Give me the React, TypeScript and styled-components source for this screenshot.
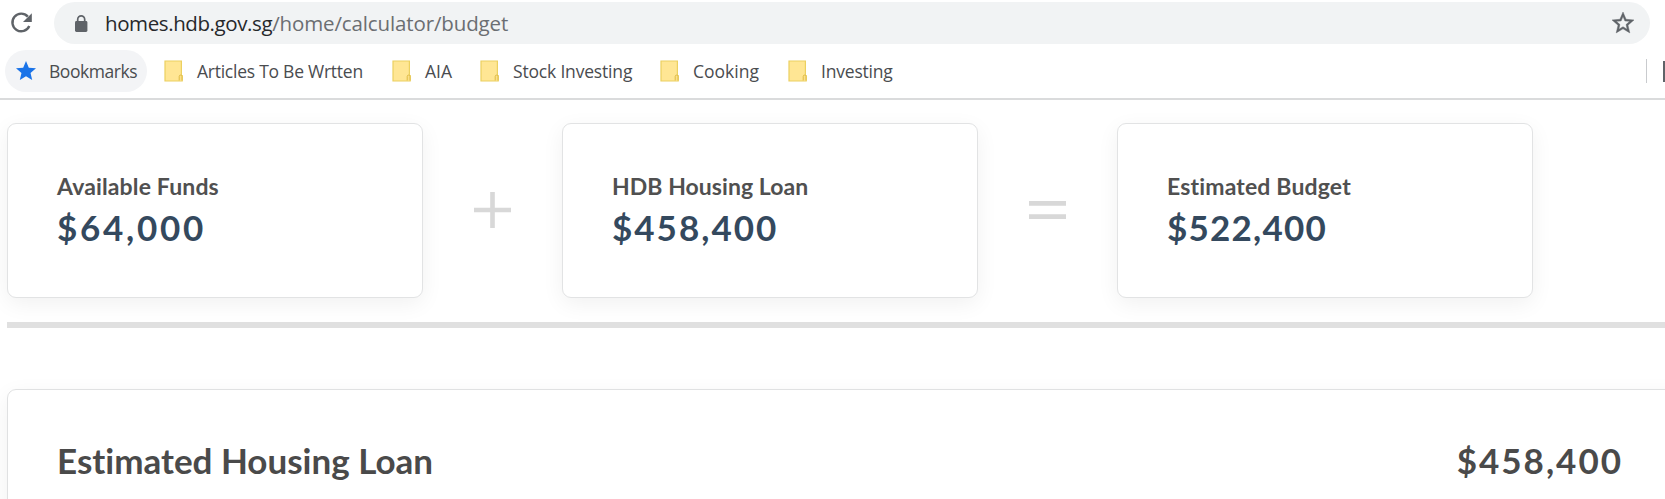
import React from "react";
import styled, { createGlobalStyle } from "styled-components";

const GlobalStyle = createGlobalStyle`
  *, *::before, *::after { box-sizing: border-box; }
  html, body { margin: 0; padding: 0; background: #fff; overflow: hidden; }
`;

const Page = styled.div`
  width: 1665px;
  height: 499px;
  overflow: hidden;
  background: #fff;
  font-family: Lato, "Liberation Sans", sans-serif;
  font-variant-ligatures: none;
`;

const Browser = styled.header`
  height: 100px;
  padding-top: 2px;
  border-bottom: 2px solid #dadbdc;
  font-family: "Open Sans", "Noto Sans", sans-serif;
`;

const AddressRow = styled.div`
  display: flex;
  align-items: center;
  height: 42px;
  padding: 0 15px 0 8px;
`;

const ReloadIcon = styled.svg`
  flex: none;
  width: 26px;
  height: 26px;
  margin-right: 20px;
`;

const AddressBar = styled.div`
  display: flex;
  align-items: center;
  flex: 1;
  height: 42px;
  padding: 0 16px 0 20px;
  border-radius: 21px;
  background: #f1f3f4;
`;

const LockIcon = styled.svg`
  width: 14px;
  height: 18px;
  margin: 2px 17px 0 0;
`;

const Url = styled.span`
  flex: 1;
  padding-bottom: 1px;
  font-size: 20.5px;
  line-height: 28px;
  letter-spacing: -0.13px;
  color: #6b6e72;
`;

const Host = styled.span`
  letter-spacing: -0.4px;
  color: #26282b;
`;

const StarIcon = styled.svg<{ $size: number }>`
  flex: none;
  width: ${(p) => p.$size}px;
  height: ${(p) => p.$size}px;
`;

const BookmarksBar = styled.nav`
  display: flex;
  align-items: center;
  height: 42px;
  margin-top: 6px;
  padding-left: 5px;
  font-size: 17.5px;
  line-height: 24px;
  color: #4a4c4f;
  white-space: nowrap;
`;

const BookmarksButton = styled.div`
  display: flex;
  align-items: center;
  gap: 13px;
  width: 142px;
  height: 42px;
  padding-left: 11px;
  margin-right: 17px;
  border-radius: 21px;
  background: #f3f4f6;
  letter-spacing: -0.45px;
`;

const Folder = styled.div<{ $width: number; $spacing: number }>`
  display: flex;
  align-items: center;
  flex: none;
  gap: 14px;
  width: ${(p) => p.$width}px;
  letter-spacing: ${(p) => p.$spacing}px;
`;

const FolderIcon = styled.svg`
  flex: none;
  width: 19px;
  height: 22px;
`;

const BarEnd = styled.div`
  display: flex;
  align-items: center;
  width: 19px;
  height: 24px;
  margin-left: auto;
  border-left: 1px solid #c9cbce;
`;

const ReadingListEdge = styled.div`
  width: 2px;
  height: 21px;
  margin-left: auto;
  background: #5f6368;
`;

const Content = styled.main`
  padding: 23px 0 0 7px;
`;

const Summary = styled.section`
  display: flex;
  align-items: center;
  height: 175px;
`;

const Card = styled.article`
  width: 416px;
  height: 175px;
  padding: 48px 0 0 49px;
  border: 1px solid #e2e3e4;
  border-radius: 9px;
  background: #fff;
  box-shadow: 0 6px 22px rgba(0, 0, 0, 0.06);
`;

const Label = styled.div<{ $spacing: number }>`
  font-size: 23px;
  line-height: 28px;
  font-weight: 700;
  letter-spacing: ${(p) => p.$spacing}px;
  color: #505050;
`;

const Amount = styled.div<{ $spacing: number }>`
  margin-top: 6px;
  font-size: 35px;
  line-height: 42px;
  font-weight: 700;
  letter-spacing: ${(p) => p.$spacing}px;
  color: #34495e;
`;

const Operator = styled.svg`
  flex: none;
  width: 37px;
  height: 37px;
  margin: 0 51px;
`;

const Divider = styled.hr`
  height: 6px;
  margin: 24px 0 61px;
  border: 0;
  background: #e0e0e0;
`;

const LoanPanel = styled.section`
  display: flex;
  justify-content: space-between;
  width: 1700px;
  height: 200px;
  padding: 49px 83px 0 49px;
  border: 1px solid #e0e1e2;
  border-radius: 9px;
  box-shadow: 0 6px 22px rgba(0, 0, 0, 0.06);
  font-size: 35px;
  line-height: 42px;
  font-weight: 700;
  color: #4a4a4a;
`;

const LoanTitle = styled.h2`
  margin: 0;
  font: inherit;
`;

const LoanAmount = styled.span`
  letter-spacing: 2px;
`;

const folders = [
  { name: "Articles To Be Wrtten", width: 228, spacing: -0.25 },
  { name: "AIA", width: 88, spacing: 0 },
  { name: "Stock Investing", width: 180, spacing: -0.18 },
  { name: "Cooking", width: 128, spacing: 0 },
  { name: "Investing", width: 110, spacing: -0.2 },
];

const PlusSign = () => (
  <Operator viewBox="0 0 37 37">
    <path d="M0 18h37M18.5 0v36" stroke="#d8d8d8" strokeWidth="4.6" />
  </Operator>
);

const EqualsSign = () => (
  <Operator viewBox="0 0 37 37">
    <path d="M0 11.4h37M0 24.6h37" stroke="#d8d8d8" strokeWidth="4.8" />
  </Operator>
);

function SummaryCard({ label, amount, labelSpacing, amountSpacing }: {
  label: string; amount: string; labelSpacing: number; amountSpacing: number;
}) {
  return (
    <Card>
      <Label $spacing={labelSpacing}>{label}</Label>
      <Amount $spacing={amountSpacing}>{amount}</Amount>
    </Card>
  );
}

export default function App() {
  return (
    <Page>
      <GlobalStyle />
      <Browser>
        <AddressRow>
          <ReloadIcon viewBox="0 0 26 26">
            <path d="M19.8 6.6A8.8 8.8 0 1 0 21.3 16" fill="none" stroke="#5f6368" strokeWidth="2.4" />
            <path d="M23.8 3.2V12H15Z" fill="#5f6368" />
          </ReloadIcon>
          <AddressBar>
            <LockIcon viewBox="0 0 14 18">
              <rect x="1" y="6" width="12.4" height="11" rx="1.4" fill="#5f6368" />
              <path d="M3.7 7V4.4a3.5 3.5 0 0 1 7 0V7" fill="none" stroke="#5f6368" strokeWidth="1.7" />
            </LockIcon>
            <Url><Host>homes.hdb.gov.sg</Host>/home/calculator/budget</Url>
            <StarIcon viewBox="2 2 20 20" $size={22}>
              <path fill="#5f6368" stroke="#5f6368" strokeWidth="0.4" d="M22 9.24l-7.19-.62L12 2 9.19 8.63 2 9.24l5.46 4.73L5.82 21 12 17.27 18.18 21l-1.63-7.03L22 9.24zM12 15.4l-3.76 2.27 1-4.28-3.32-2.88 4.38-.38L12 6.1l1.71 4.04 4.38.38-3.32 2.88 1 4.28L12 15.4z" />
            </StarIcon>
          </AddressBar>
        </AddressRow>
        <BookmarksBar>
          <BookmarksButton>
            <StarIcon viewBox="2 2 20 20" $size={20}>
              <path fill="#1a73e8" d="M12 17.27 18.18 21l-1.64-7.03L22 9.24l-7.19-.61L12 2 9.19 8.63 2 9.24l5.46 4.73L5.82 21z" />
            </StarIcon>
            Bookmarks
          </BookmarksButton>
          {folders.map((folder) => (
            <Folder key={folder.name} $width={folder.width} $spacing={folder.spacing}>
              <FolderIcon viewBox="0 0 19 22">
                <path d="M1 1H17.4V15.5H18.2V21H1Z" fill="#ffe694" stroke="#ecd060" strokeWidth="1.2" />
                <path d="M15.2 20.5v-4a1.4 1.4 0 0 1 2.8 0v4" fill="#fbe08a" stroke="#dfbb45" strokeWidth="1" />
              </FolderIcon>
              {folder.name}
            </Folder>
          ))}
          <BarEnd><ReadingListEdge /></BarEnd>
        </BookmarksBar>
      </Browser>
      <Content>
        <Summary>
          <SummaryCard label="Available Funds" amount="$64,000" labelSpacing={0.14} amountSpacing={2.7} />
          <PlusSign />
          <SummaryCard label="HDB Housing Loan" amount="$458,400" labelSpacing={0.05} amountSpacing={2} />
          <EqualsSign />
          <SummaryCard label="Estimated Budget" amount="$522,400" labelSpacing={0.16} amountSpacing={1.2} />
        </Summary>
        <Divider />
        <LoanPanel>
          <LoanTitle>Estimated Housing Loan</LoanTitle>
          <LoanAmount>$458,400</LoanAmount>
        </LoanPanel>
      </Content>
    </Page>
  );
}
